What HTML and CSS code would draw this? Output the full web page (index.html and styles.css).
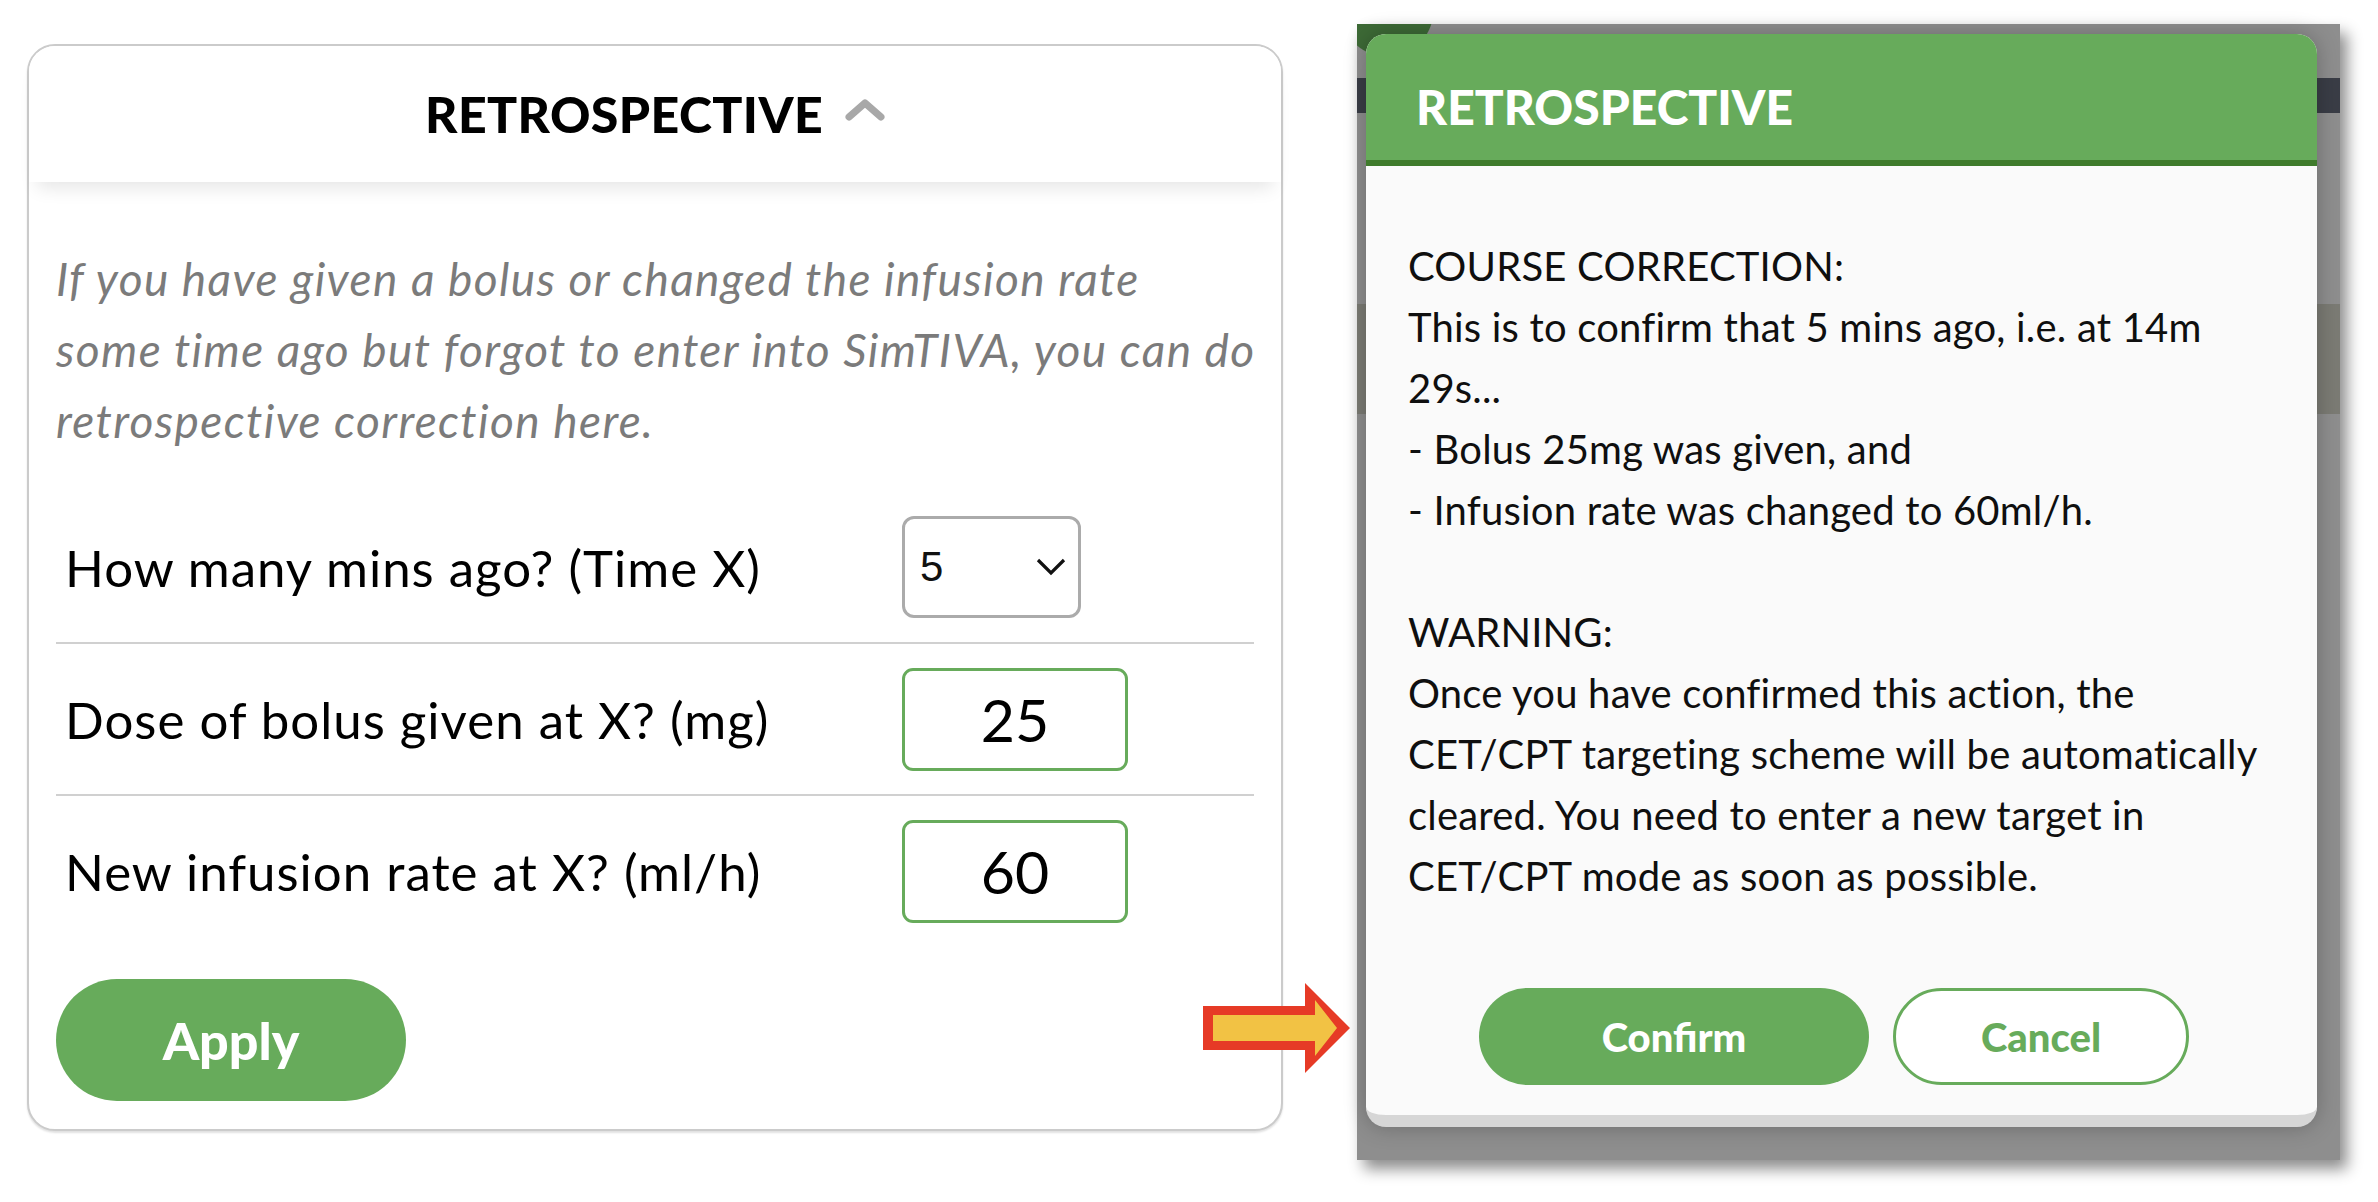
FILE: index.html
```html
<!DOCTYPE html>
<html lang="en">
<head>
<meta charset="utf-8">
<title>Retrospective correction</title>
<link rel="stylesheet" href="styles.css">
</head>
<body>
<main class="page">
  <section class="card">
    <header class="card-head">
      <h2 class="card-title">RETROSPECTIVE</h2>
      <svg class="chev-up" width="40" height="22" viewBox="0 0 40 22"><polyline points="4,18 20,4 36,18" fill="none" stroke="#a8a8a8" stroke-width="7" stroke-linecap="round" stroke-linejoin="round"/></svg>
    </header>
    <div class="card-body">
      <p class="desc">If you have given a bolus or changed the infusion rate<br>some time ago but forgot to enter into SimTIVA, you can do<br>retrospective correction here.</p>
      <div class="rows">
        <div class="row">
          <span class="label">How many mins ago? (Time X)</span>
          <div class="select"><span class="select-val">5</span><svg width="30" height="18" viewBox="0 0 30 18"><polyline points="2,2 15,15 28,2" fill="none" stroke="#111" stroke-width="3.2"/></svg></div>
        </div>
        <div class="row">
          <span class="label">Dose of bolus given at X? (mg)</span>
          <div class="field">25</div>
        </div>
        <div class="row last">
          <span class="label">New infusion rate at X? (ml/h)</span>
          <div class="field">60</div>
        </div>
      </div>
      <button class="btn btn-apply">Apply</button>
    </div>
  </section>

  <svg class="arrow" width="148" height="90" viewBox="0 0 148 90">
    <polygon points="0,23 102,23 102,0 147,45 102,90 102,67 0,67" fill="#e63a26"/>
    <polygon points="10,32 112,32 112,17 134,45 112,73 112,58 10,58" fill="#f2c244"/>
  </svg>

  <section class="shot">
    <div class="modal">
      <header class="modal-head"><h2 class="modal-title">RETROSPECTIVE</h2></header>
      <div class="modal-body">
        <p class="msg">COURSE CORRECTION:<br>This is to confirm that 5 mins ago, i.e. at 14m<br>29s...<br>- Bolus 25mg was given, and<br>- Infusion rate was changed to 60ml/h.<br><br>WARNING:<br>Once you have confirmed this action, the<br>CET/CPT targeting scheme will be automatically<br>cleared. You need to enter a new target in<br>CET/CPT mode as soon as possible.</p>
        <div class="actions">
          <button class="btn btn-confirm">Confirm</button>
          <button class="btn btn-cancel">Cancel</button>
        </div>
      </div>
    </div>
  </section>
</main>
</body>
</html>
```

FILE: styles.css
```css
* { box-sizing: border-box; }
html, body { margin: 0; padding: 0; background: #fff; }
body { font-family: "Lato", "Noto Sans", sans-serif; color: #111; }

.page {
  position: relative;
  display: flex;
  align-items: flex-start;
  padding-left: 27px;
  width: 2378px;
  height: 1202px;
}

/* ---------- left card ---------- */
.card {
  width: 1256px;
  margin-top: 44px;
  border: 2px solid #cbcbcb;
  border-radius: 28px;
  background: #fff;
  box-shadow: 0 2px 2px rgba(0,0,0,0.12);
}
.card-head {
  height: 136px;
  display: flex;
  align-items: center;
  justify-content: center;
  gap: 22px;
  border-radius: 26px 26px 0 0;
  background: #fff;
  box-shadow: 0 14px 18px -8px rgba(0,0,0,0.10);
  position: relative;
}
.card-title {
  margin: 0;
  font-size: 50px;
  font-weight: 900;
  color: #000;
  letter-spacing: 0.4px;
}
.chev-up { margin-top: -8px; }
.card-body { padding: 61px 27px 28px 27px; }
.desc {
  margin: 0;
  font-style: italic;
  font-size: 46px;
  line-height: 71px;
  letter-spacing: 1.4px;
  white-space: nowrap;
  color: #7b7b7b;
}
.rows { margin-top: 36px; }
.row {
  display: grid;
  grid-template-columns: 846px auto;
  align-items: center;
  height: 152px;
  border-bottom: 2px solid #d0d0d0;
}
.row.last { border-bottom: 0; height: 150px; }
.label {
  padding-left: 9px;
  font-size: 51px;
  letter-spacing: 1px;
  color: #000;
}
.select {
  width: 179px;
  height: 102px;
  border: 3px solid #ababab;
  border-radius: 12px;
  display: flex;
  align-items: center;
  justify-content: space-between;
  padding: 0 12px 0 15px;
}
.select-val {
  font-family: "Liberation Sans", Arial, sans-serif;
  font-size: 42px;
  color: #111;
}
.field {
  width: 226px;
  height: 103px;
  border: 3px solid #67ab5b;
  border-radius: 11px;
  display: flex;
  align-items: center;
  justify-content: center;
  font-size: 59px;
  color: #000;
}
.btn {
  font-family: "Lato", "Noto Sans", sans-serif;
  font-weight: 900;
  border: 0;
  cursor: pointer;
  padding: 0;
}
.btn-apply {
  margin-top: 33px;
  width: 350px;
  height: 122px;
  border-radius: 61px;
  background: #67ab5b;
  color: #fff;
  font-size: 52px;
}

/* ---------- arrow overlay ---------- */
.arrow {
  position: absolute;
  left: 1203px;
  top: 983px;
}

/* ---------- right screenshot ---------- */
.shot {
  margin-left: 74px;
  margin-top: 24px;
  width: 983px;
  height: 1136px;
  padding: 10px 0 0 9px;
  background:
    radial-gradient(circle at 30px -14px, #3d6a36 0 46px, transparent 47px),
    linear-gradient(to bottom, transparent 0 54px, #3a3d46 54px 89px, transparent 89px),
    linear-gradient(to bottom, transparent 0 280px, #7b7b74 280px 390px, transparent 390px),
    #8e8e8e;
  box-shadow: 7px 9px 14px rgba(0,0,0,0.45);
}
.modal {
  width: 951px;
  border-radius: 20px;
  overflow: hidden;
  background: #fafafa;
  border-bottom: 12px solid #d6d6d6;
  box-shadow: 0 0 22px rgba(0,0,0,0.25);
}
.modal-head {
  height: 132px;
  background: #67ab5b;
  border-bottom: 6px solid #3f7b2b;
  display: flex;
  align-items: center;
  padding: 18px 0 0 50px;
}
.modal-title {
  margin: 0;
  font-size: 48px;
  font-weight: 900;
  color: #fff;
}
.modal-body { padding: 70px 42px 30px 42px; }
.msg {
  margin: 0;
  font-size: 40px;
  line-height: 61px;
  letter-spacing: 0.2px;
  color: #0f0f0f;
}
.actions {
  display: flex;
  gap: 24px;
  margin-top: 81px;
  padding-left: 71px;
}
.btn-confirm {
  width: 390px;
  height: 97px;
  border-radius: 49px;
  background: #67ab5b;
  color: #fff;
  font-size: 40px;
}
.btn-cancel {
  width: 296px;
  height: 97px;
  border-radius: 49px;
  background: #fff;
  border: 3px solid #67ab5b;
  color: #67ab5b;
  font-size: 40px;
}
```
